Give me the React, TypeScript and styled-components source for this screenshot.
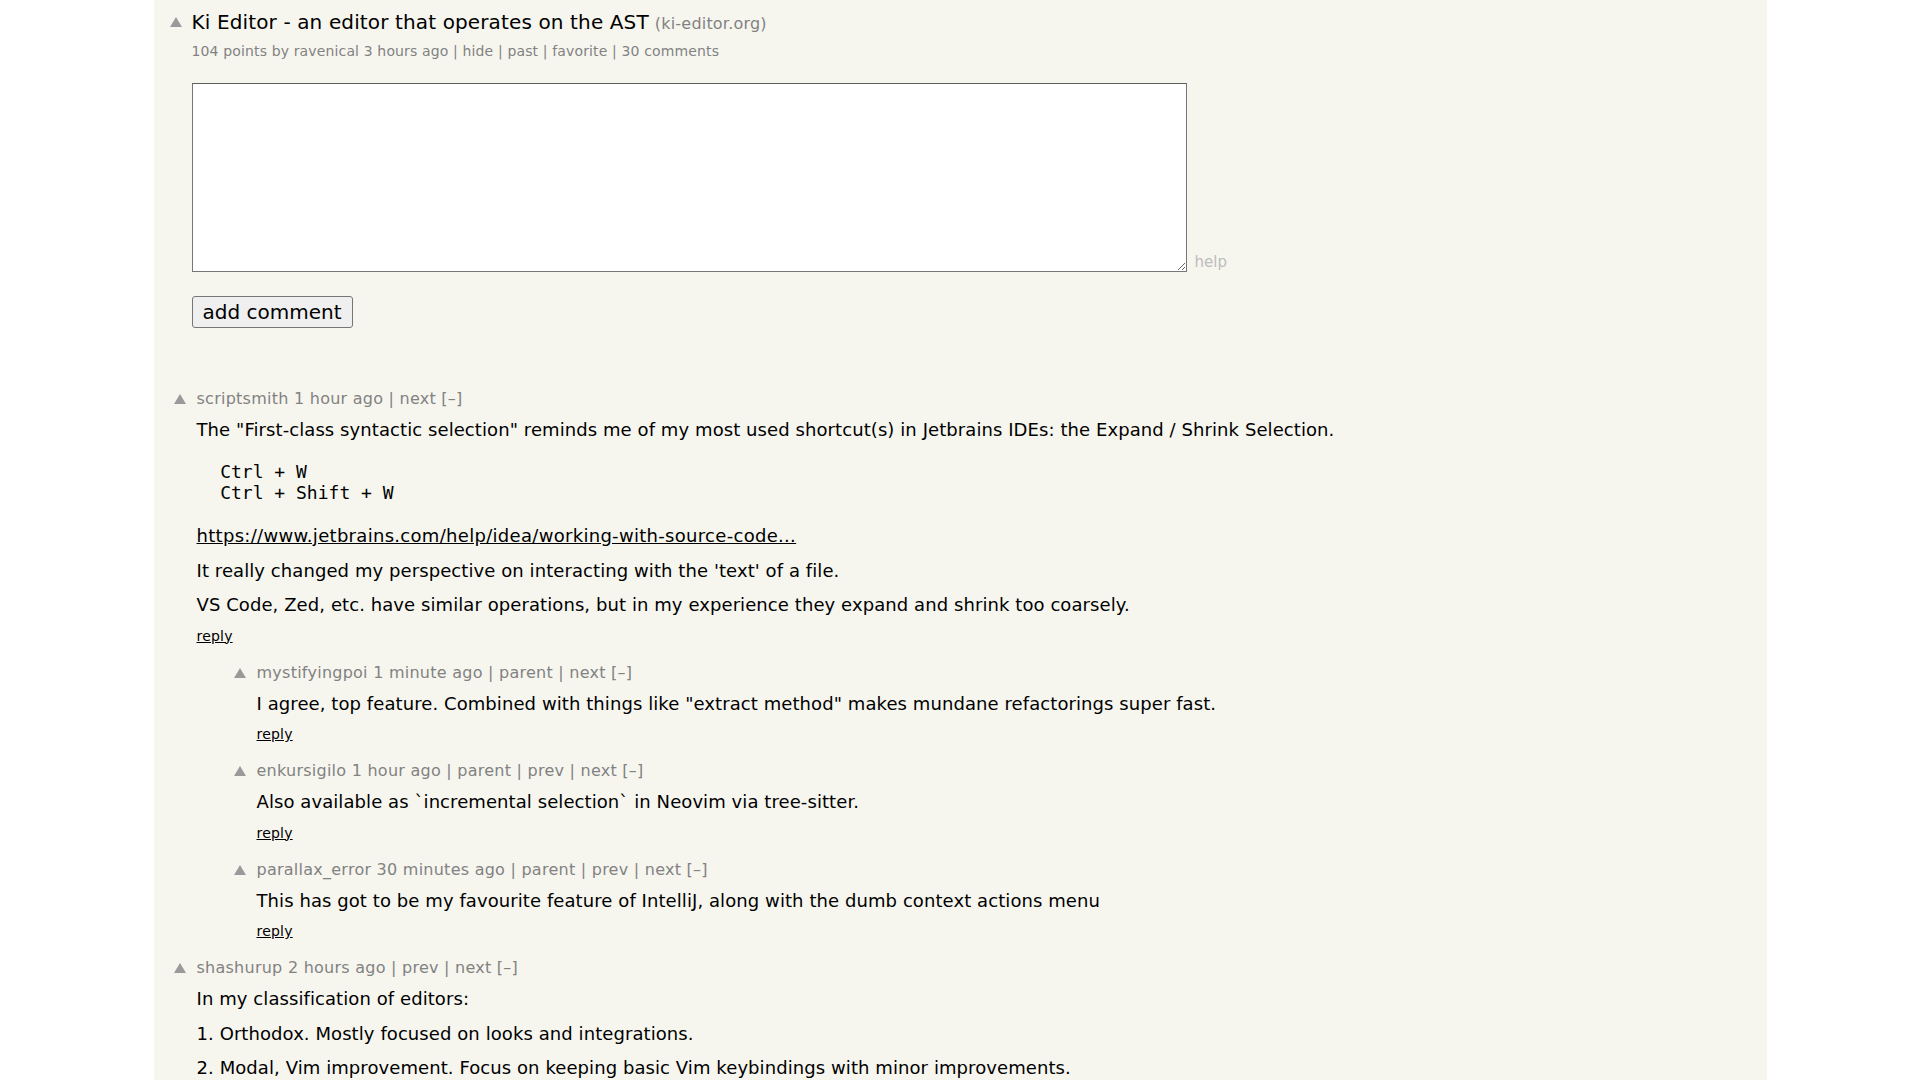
import React from 'react'
import styled, { createGlobalStyle } from 'styled-components'

const GlobalStyle = createGlobalStyle`
  html, body {
    margin: 0;
    padding: 0;
    background: #ffffff;
    overflow: hidden;
  }
  body {
    font-family: 'DejaVu Sans', Verdana, sans-serif;
  }
`

type Comment = {
  user: string
  age: string
  links: string[]
  indent: number
  body: React.ReactNode[]
}

const VoteArrow: React.FC<{ top: number }> = ({ top }) => (
  <ArrowBox $top={top}>
    <svg width="12" height="10" viewBox="0 0 12 10">
      <polygon points="0,10 6,0 12,10" fill="#9a9a9a" />
    </svg>
  </ArrowBox>
)

export default function App(): JSX.Element {
  const comments = getComments()
  return (
    <>
      <GlobalStyle />
      <Page>
        <TitleRow>
          <VoteArrow top={6} />
          <TitleLine>
            <TitleLink href="#">Ki Editor - an editor that operates on the AST</TitleLink>
            <SiteBit>
              (<a href="#">ki-editor.org</a>)
            </SiteBit>
          </TitleLine>
        </TitleRow>
        <SubText>
          104 points by <a href="#">ravenical</a> <a href="#">3 hours ago</a> | <a href="#">hide</a> |{' '}
          <a href="#">past</a> | <a href="#">favorite</a> | <a href="#">30&nbsp;comments</a>
        </SubText>

        <CommentForm onSubmit={(e) => e.preventDefault()}>
          <TextRow>
            <TextArea />
            <HelpLink href="#">help</HelpLink>
          </TextRow>
          <SubmitButton type="submit">add comment</SubmitButton>
        </CommentForm>

        <CommentTree>
          {comments.map((c) => (
            <CommentRow key={c.user} $indent={c.indent}>
              <VoteArrow top={5} />
              <CommentBody>
                <ComHead>
                  <a href="#">{c.user}</a> <a href="#">{c.age}</a>
                  {c.links.map((l) => (
                    <span key={l}>
                      {' | '}
                      <a href="#">{l}</a>
                    </span>
                  ))}{' '}
                  <a href="#">[–]</a>
                </ComHead>
                <CommText>{c.body}</CommText>
                <Reply>
                  <a href="#">reply</a>
                </Reply>
              </CommentBody>
            </CommentRow>
          ))}
        </CommentTree>
      </Page>
    </>
  )
}

const Page = styled.div`
  width: 1613px;
  height: 100vh;
  overflow: hidden;
  margin: 0 auto;
  padding-top: 11px;
  box-sizing: border-box;
  background: #f6f6ef;
`

const ArrowBox = styled.div<{ $top: number }>`
  flex: none;
  width: 12px;
  height: 10px;
  margin-top: ${(p) => p.$top}px;

  svg {
    display: block;
  }
`

const TitleRow = styled.div`
  display: flex;
  align-items: flex-start;
  gap: 10px;
  padding-left: 16px;
`

const TitleLine = styled.div`
  font-size: 20px;
  line-height: 22px;
  letter-spacing: 0.13px;
  white-space: nowrap;
`

const TitleLink = styled.a`
  color: #000000;
  text-decoration: none;
`

const SiteBit = styled.span`
  margin-left: 6px;
  font-size: 16px;
  letter-spacing: 0.2px;
  color: #828282;

  a {
    color: #828282;
    text-decoration: none;
  }
`

const SubText = styled.div`
  margin-top: 7px;
  padding-left: 38px;
  font-size: 14px;
  line-height: 18px;
  letter-spacing: 0.14px;
  color: #828282;

  a {
    color: #828282;
    text-decoration: none;
  }
`

const CommentForm = styled.form`
  margin: 23px 0 0;
  padding-left: 38px;
`

const TextRow = styled.div`
  display: flex;
  align-items: flex-end;
  gap: 8px;
`

const TextArea = styled.textarea`
  width: 995px;
  height: 189px;
  box-sizing: border-box;
  margin: 0;
  border: 1px solid #767676;
  border-top-color: #5e5e5e;
  background: #ffffff;
  font-family: 'DejaVu Sans Mono', monospace;
  font-size: 20px;
`

const HelpLink = styled.a`
  font-size: 15px;
  line-height: 18px;
  margin-bottom: 1px;
  color: #bdbdbd;
  text-decoration: none;
`

const SubmitButton = styled.button`
  display: block;
  margin-top: 24px;
  height: 32px;
  padding: 0 10px;
  border: 1px solid #767676;
  border-radius: 3px;
  background: #efefef;
  color: #000000;
  font-family: 'DejaVu Sans', Verdana, sans-serif;
  font-size: 20px;
  line-height: 23px;
`

const CommentTree = styled.div`
  margin-top: 61px;
`

const CommentRow = styled.div<{ $indent: number }>`
  display: flex;
  align-items: flex-start;
  gap: 11px;
  padding-left: ${(p) => 20 + p.$indent * 60}px;
  margin-bottom: 18px;
`

const CommentBody = styled.div`
  display: flex;
  flex-direction: column;
  min-width: 0;
`

const ComHead = styled.div`
  font-size: 16px;
  line-height: 20px;
  letter-spacing: 0.25px;
  color: #828282;
  white-space: nowrap;

  a {
    color: #828282;
    text-decoration: none;
  }
`

const CommText = styled.div`
  margin-top: 10px;
  font-size: 18px;
  line-height: 22px;
  letter-spacing: 0.08px;
  color: #000000;

  a {
    color: #000000;
    text-decoration: underline;
    letter-spacing: 0.3px;
  }
`

const P = styled.p`
  margin: 12.5px 0 0;

  &:first-child {
    margin-top: 0;
  }
`

const Pre = styled.pre`
  margin: 18px 0 20px;
  padding: 2px;
  font-family: 'DejaVu Sans Mono', monospace;
  font-size: 18px;
  line-height: 21px;
  letter-spacing: 0;
  white-space: pre;
`

const Reply = styled.div`
  margin-top: 10.5px;
  font-size: 14px;
  line-height: 18px;
  letter-spacing: 0.2px;

  a {
    color: #000000;
    text-decoration: underline;
  }
`

function getComments(): Comment[] {
  return [
    {
      user: 'scriptsmith',
      age: '1 hour ago',
      links: ['next'],
      indent: 0,
      body: [
        <P key="a">
          The "First-class syntactic selection" reminds me of my most used shortcut(s) in Jetbrains
          IDEs: the Expand / Shrink Selection.
        </P>,
        <Pre key="b">{'  Ctrl + W\n  Ctrl + Shift + W'}</Pre>,
        <P key="c">
          <a href="#">https://www.jetbrains.com/help/idea/working-with-source-code...</a>
        </P>,
        <P key="d">It really changed my perspective on interacting with the 'text' of a file.</P>,
        <P key="e">
          VS Code, Zed, etc. have similar operations, but in my experience they expand and shrink too
          coarsely.
        </P>,
      ],
    },
    {
      user: 'mystifyingpoi',
      age: '1 minute ago',
      links: ['parent', 'next'],
      indent: 1,
      body: [
        <P key="a">
          I agree, top feature. Combined with things like "extract method" makes mundane refactorings
          super fast.
        </P>,
      ],
    },
    {
      user: 'enkursigilo',
      age: '1 hour ago',
      links: ['parent', 'prev', 'next'],
      indent: 1,
      body: [<P key="a">Also available as `incremental selection` in Neovim via tree-sitter.</P>],
    },
    {
      user: 'parallax_error',
      age: '30 minutes ago',
      links: ['parent', 'prev', 'next'],
      indent: 1,
      body: [
        <P key="a">
          This has got to be my favourite feature of IntelliJ, along with the dumb context actions menu
        </P>,
      ],
    },
    {
      user: 'shashurup',
      age: '2 hours ago',
      links: ['prev', 'next'],
      indent: 0,
      body: [
        <P key="a">In my classification of editors:</P>,
        <P key="b">1. Orthodox. Mostly focused on looks and integrations.</P>,
        <P key="c">
          2. Modal, Vim improvement. Focus on keeping basic Vim keybindings with minor improvements.
        </P>,
      ],
    },
  ]
}
